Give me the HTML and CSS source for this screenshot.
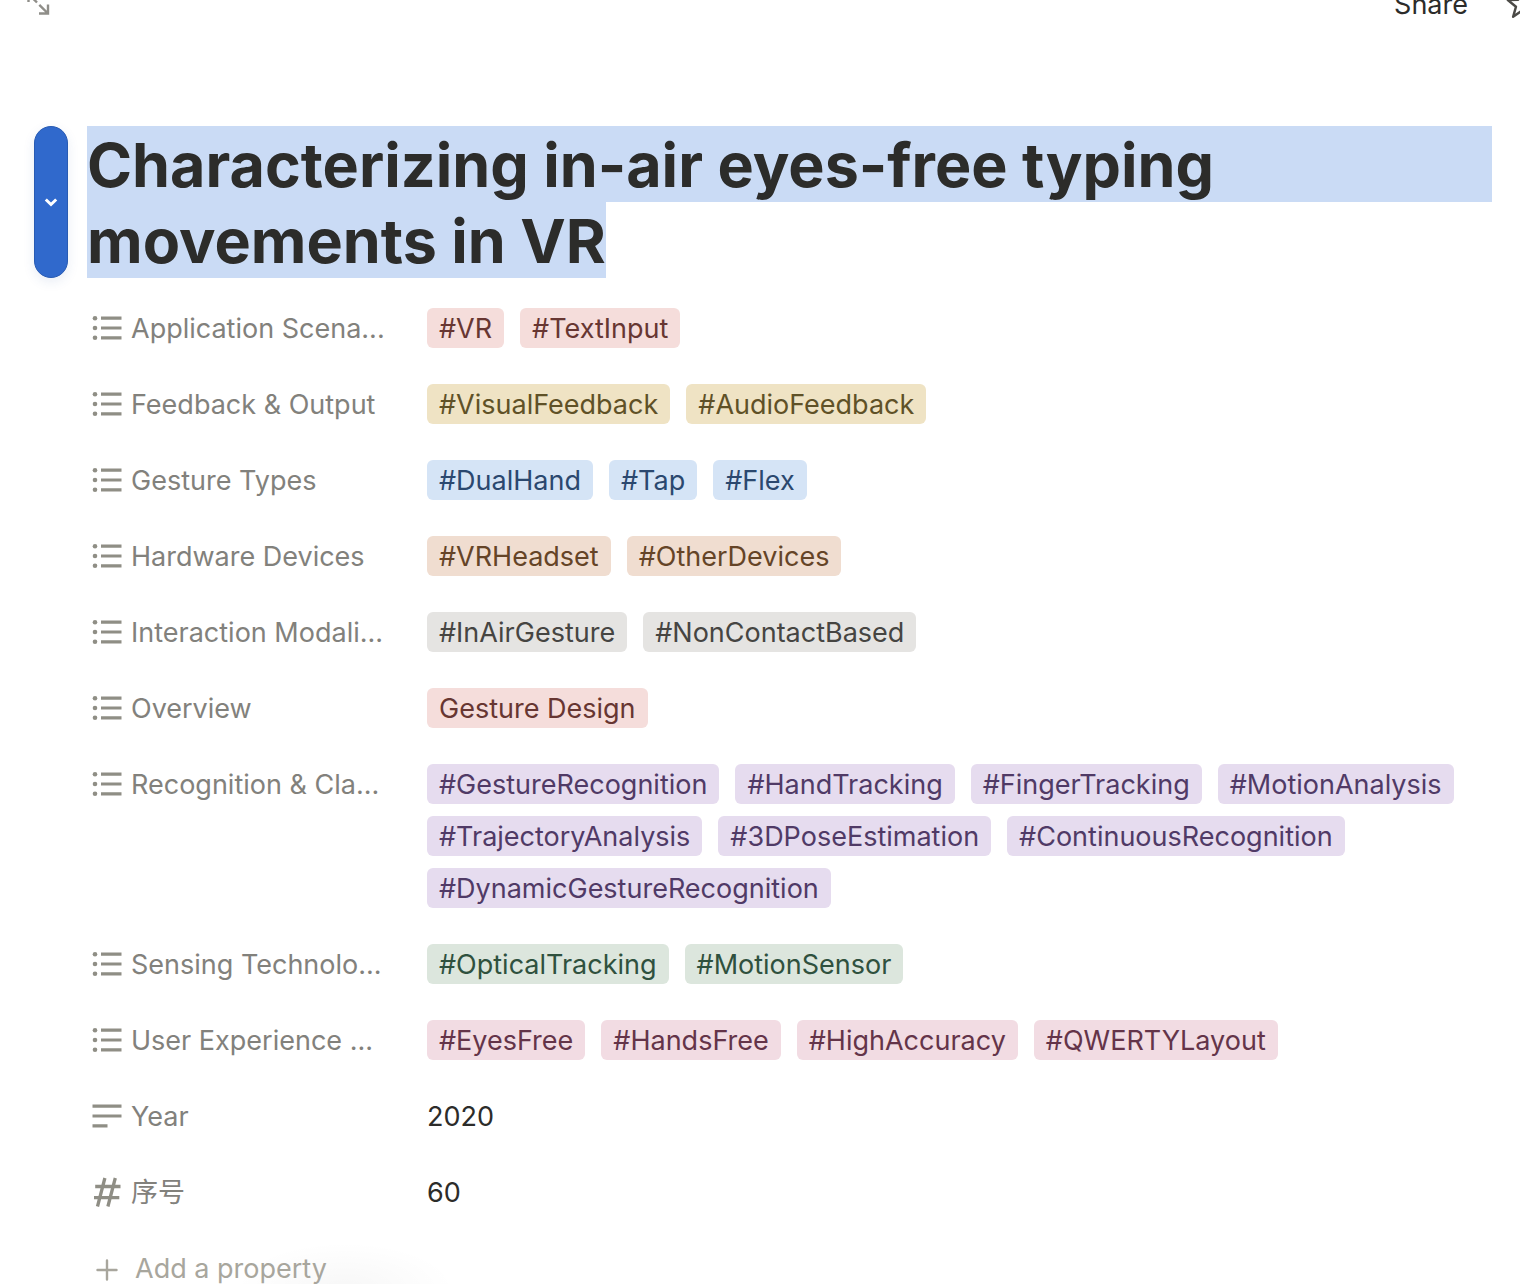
FILE: index.html
```html
<!DOCTYPE html>
<html lang="en">
<head>
<meta charset="utf-8">
<meta name="viewport" content="width=device-width, initial-scale=1">
<title>Characterizing in-air eyes-free typing movements in VR</title>
<link rel="stylesheet" href="styles.css">
</head>
<body>
<svg class="sprite" aria-hidden="true">
  <symbol id="list" viewBox="0 0 30 30">
    <g fill="currentColor"><circle cx="3" cy="5.200" r="2.300"/><circle cx="3" cy="15" r="2.300"/><circle cx="3" cy="24.800" r="2.300"/></g>
    <path d="M9 5.200h20.500M9 15h20.500M9 24.800h20.500" stroke="currentColor" stroke-width="3.200"/>
  </symbol>
  <symbol id="text" viewBox="0 0 30 30">
    <path d="M.5 5.200h29M.5 15h29M.5 24.800h15" stroke="currentColor" stroke-width="3.200"/>
  </symbol>
  <symbol id="number" viewBox="0 0 30 30">
    <path d="M12.900 1L5.500 29.500M23.300 1L15.900 29.500M3.200 9.500h25.300M2 20.700h25.300" stroke="currentColor" stroke-width="3.300"/>
  </symbol>
</svg>

<header class="topbar">
  <button class="icon-button expand" type="button" aria-label="Open as full page">
    <svg width="24" height="24" viewBox="0 0 24 24" fill="none" stroke="currentColor" stroke-width="2.400"><path d="M12 21.500h9V12.500M12.300 12.800l8.200 8.200M10 10.500L2.500 3M1.500 10V2H10.500"/></svg>
  </button>
  <div class="actions">
    <button class="share" type="button">Share</button>
    <button class="icon-button star" type="button" aria-label="Favorite">
      <svg width="32" height="32" viewBox="0 0 32 32" fill="none" stroke="currentColor" stroke-width="2.400" stroke-linejoin="round"><path d="M17.500 2l3.400 9.800 10.300.2-8.200 6.700 2.900 10.100-8.400-5.900-8.400 5.900L12 18.700 3.800 12l10.300-.2z"/></svg>
    </button>
  </div>
</header>

<main class="page">
  <div class="heading">
    <button class="handle" type="button" aria-label="Block menu">
      <svg width="14" height="10" viewBox="0 0 14 10" fill="none" stroke="currentColor" stroke-width="3"><path d="M1.800 2.500L7 7.500l5.200-5"/></svg>
    </button>
    <h1 class="title"><span class="selected-line">Characterizing in-air eyes-free typing</span> <span class="selected-end">movements in VR</span></h1>
  </div>

  <dl class="properties">
    <div class="property">
      <dt><svg class="icon"><use href="#list"/></svg>Application Scena...</dt>
      <dd><span class="tag red">#VR</span><span class="tag red">#TextInput</span></dd>
    </div>
    <div class="property">
      <dt><svg class="icon"><use href="#list"/></svg>Feedback &amp; Output</dt>
      <dd><span class="tag yellow">#VisualFeedback</span><span class="tag yellow">#AudioFeedback</span></dd>
    </div>
    <div class="property">
      <dt><svg class="icon"><use href="#list"/></svg>Gesture Types</dt>
      <dd><span class="tag blue">#DualHand</span><span class="tag blue">#Tap</span><span class="tag blue">#Flex</span></dd>
    </div>
    <div class="property">
      <dt><svg class="icon"><use href="#list"/></svg>Hardware Devices</dt>
      <dd><span class="tag orange">#VRHeadset</span><span class="tag orange">#OtherDevices</span></dd>
    </div>
    <div class="property">
      <dt><svg class="icon"><use href="#list"/></svg>Interaction Modali...</dt>
      <dd><span class="tag gray">#InAirGesture</span><span class="tag gray">#NonContactBased</span></dd>
    </div>
    <div class="property">
      <dt><svg class="icon"><use href="#list"/></svg>Overview</dt>
      <dd><span class="tag red">Gesture Design</span></dd>
    </div>
    <div class="property">
      <dt><svg class="icon"><use href="#list"/></svg>Recognition &amp; Cla...</dt>
      <dd><span class="tag purple">#GestureRecognition</span><span class="tag purple">#HandTracking</span><span class="tag purple">#FingerTracking</span><span class="tag purple">#MotionAnalysis</span><span class="tag purple">#TrajectoryAnalysis</span><span class="tag purple">#3DPoseEstimation</span><span class="tag purple">#ContinuousRecognition</span><span class="tag purple">#DynamicGestureRecognition</span></dd>
    </div>
    <div class="property">
      <dt><svg class="icon"><use href="#list"/></svg>Sensing Technolo...</dt>
      <dd><span class="tag green">#OpticalTracking</span><span class="tag green">#MotionSensor</span></dd>
    </div>
    <div class="property">
      <dt><svg class="icon"><use href="#list"/></svg>User Experience ...</dt>
      <dd><span class="tag pink">#EyesFree</span><span class="tag pink">#HandsFree</span><span class="tag pink">#HighAccuracy</span><span class="tag pink">#QWERTYLayout</span></dd>
    </div>
    <div class="property">
      <dt><svg class="icon"><use href="#text"/></svg>Year</dt>
      <dd><span class="value">2020</span></dd>
    </div>
    <div class="property">
      <dt lang="zh"><svg class="icon"><use href="#number"/></svg>序号</dt>
      <dd><span class="value">60</span></dd>
    </div>
  </dl>

  <div class="footer">
    <button class="add" type="button">
      <svg width="22" height="22" viewBox="0 0 22 22" fill="none" stroke="currentColor" stroke-width="2.400" stroke-linecap="round"><path d="M11 1.500v19M1.500 11h19"/></svg>
      Add a property
    </button>
  </div>
</main>
</body>
</html>
```
FILE: styles.css
```css
* {
  box-sizing: border-box;
}

body {
  margin: 0;
  background: #fff;
  color: #2c2c2a;
  font: 27px/38px Inter, "Noto Sans CJK SC", sans-serif;
}

button {
  margin: 0;
  padding: 0;
  border: 0;
  background: none;
  color: inherit;
  font: inherit;
  cursor: pointer;
}

svg {
  display: block;
  flex: none;
}

.sprite {
  position: absolute;
  width: 0;
  height: 0;
}

/* Top bar, scrolled partly out of view */
.topbar {
  display: flex;
  align-items: flex-end;
  justify-content: space-between;
  height: 24px;
  padding-left: 27px;
  overflow: hidden;
}

.expand {
  padding-bottom: 8px;
  color: #8f8e89;
}

.actions {
  display: flex;
  align-items: flex-end;
  gap: 36px;
  margin-right: -16px;
}

.star {
  padding-bottom: 4px;
  color: #4b4a46;
}

.page {
  padding: 102px 28px 0 34px;
}

.heading {
  display: flex;
  gap: 19px;
}

.handle {
  display: grid;
  place-items: center;
  flex: none;
  width: 34px;
  border: 1px solid #285bb3;
  border-radius: 17px;
  background: #3069cc;
  box-shadow: 0 4px 12px rgba(40, 80, 160, 0.1);
  color: #fff;
}

.title {
  flex: 1;
  margin: 0;
  font-size: 61px;
  font-weight: 700;
  line-height: 74px;
}

.selected-line,
.selected-end {
  display: block;
  padding-top: 2px;
  background: #cadbf5;
}

.selected-end {
  width: fit-content;
}

.properties {
  display: flex;
  flex-direction: column;
  gap: 36px;
  margin: 0;
  padding: 30px 0 0 58px;
}

.property {
  display: grid;
  grid-template-columns: 335px 1fr;
}

dt {
  display: flex;
  align-items: center;
  gap: 9px;
  height: 40px;
  padding-top: 2px;
  color: #82817c;
  white-space: nowrap;
}

.icon {
  width: 30px;
  height: 30px;
  margin-bottom: 2px;
  color: #8f8e85;
}

dd {
  display: flex;
  flex-wrap: wrap;
  gap: 12px 16px;
  margin: 0;
}

.value {
  padding-top: 2px;
}

.tag {
  padding: 2px 12px 0;
  border-radius: 6px;
}

.red { background: #f5dddb; color: #673632; }
.yellow { background: #efe3c4; color: #5f5127; }
.blue { background: #d5e4f6; color: #2b486f; }
.orange { background: #f0ddd0; color: #654427; }
.gray { background: #e5e4e2; color: #464542; }
.purple { background: #e6dcef; color: #503a66; }
.green { background: #dce6dd; color: #2f513e; }
.pink { background: #f2dce3; color: #643449; }

.footer {
  margin-top: 12px;
  padding: 26px 0 0 62px;
  background: radial-gradient(ellipse 110px 46px at 311px bottom, rgba(0, 0, 0, 0.03), transparent);
}

.add {
  display: flex;
  align-items: center;
  gap: 17px;
  color: #a8a69d;
}

.add svg {
  margin-top: 2px;
}
```
